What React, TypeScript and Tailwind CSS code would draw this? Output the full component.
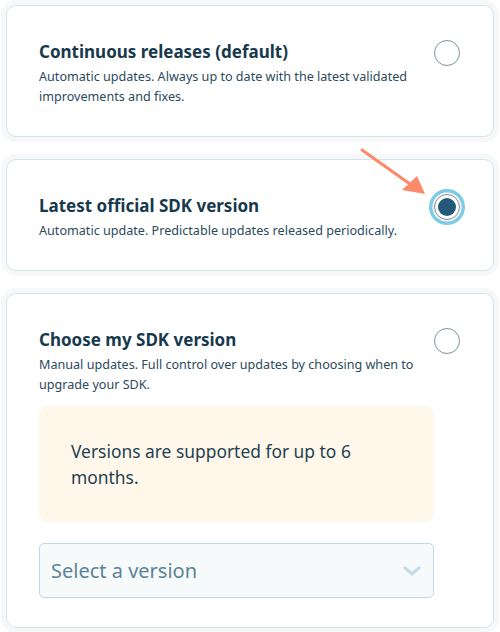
import React from "react";

const font = { fontFamily: '"Noto Sans", "Open Sans", sans-serif' };

function Radio({ selected }: { selected?: boolean }) {
  if (selected) {
    return (
      <div className="w-[26px] h-[26px] rounded-full border border-[#7b8a93] bg-white flex items-center justify-center shrink-0 shadow-[0_0_0_1.5px_#ffffff,0_0_0_5px_#7fcbe6]">
        <div className="w-[18px] h-[18px] rounded-full bg-[#245a78]" />
      </div>
    );
  }
  return <div className="w-[26px] h-[26px] rounded-full border border-[#7b939f] bg-white shrink-0" />;
}

function Card({
  title,
  desc,
  selected,
  children,
}: {
  title: string;
  desc: string;
  selected?: boolean;
  children?: React.ReactNode;
}) {
  return (
    <div className="bg-white border border-[#d5e4ea] rounded-[10px] shadow-[0_0_0_5px_#f5f7f8] pl-8 pr-[33px] pt-[34px] pb-[29px] flex items-start">
      <div className="w-[396px] flex flex-col">
        <div className="text-[17px] leading-[24px] font-bold text-[#17394d]">{title}</div>
        <div className="mt-[3px] text-[12.6px] leading-[20px] text-[#2b4a5c]">{desc}</div>
        {children}
      </div>
      <div className="flex-1 flex justify-end">
        <Radio selected={selected} />
      </div>
    </div>
  );
}

export default function App() {
  return (
    <div className="relative w-[500px] h-[632px] bg-white px-[6px] pt-[5px] flex flex-col gap-[22px]" style={font}>
      <Card
        title="Continuous releases (default)"
        desc="Automatic updates. Always up to date with the latest validated improvements and fixes."
      />
      <Card
        title="Latest official SDK version"
        desc="Automatic update. Predictable updates released periodically."
        selected
      />
      <Card
        title="Choose my SDK version"
        desc="Manual updates. Full control over updates by choosing when to upgrade your SDK."
      >
        <div className="mt-[11px] bg-[#fff8ea] rounded-[9px] px-8 py-8 text-[17.4px] leading-[26px] text-[#1f3f52]">
          Versions are supported for up to 6 months.
        </div>
        <div className="mt-[21px] h-[55px] bg-[#f7fafa] border border-[#c3d7e0] rounded-[5px] pl-[11px] pr-[12px] flex items-center justify-between">
          <span className="text-[20px] text-[#5b8397]">Select a version</span>
          <svg width="18" height="12" viewBox="0 0 18 12" fill="none">
            <path d="M2 3 L9 9 L16 3" stroke="#c3dce6" strokeWidth="3.2" strokeLinecap="round" strokeLinejoin="round" />
          </svg>
        </div>
      </Card>
      <svg className="absolute left-0 top-0 pointer-events-none" width="500" height="632" viewBox="0 0 500 632">
        <line x1="362" y1="150" x2="410" y2="184" stroke="#fa8a6a" strokeWidth="3" strokeLinecap="round" />
        <polygon points="425,194 402,190 417,176" fill="#fa8a6a" />
      </svg>
    </div>
  );
}
